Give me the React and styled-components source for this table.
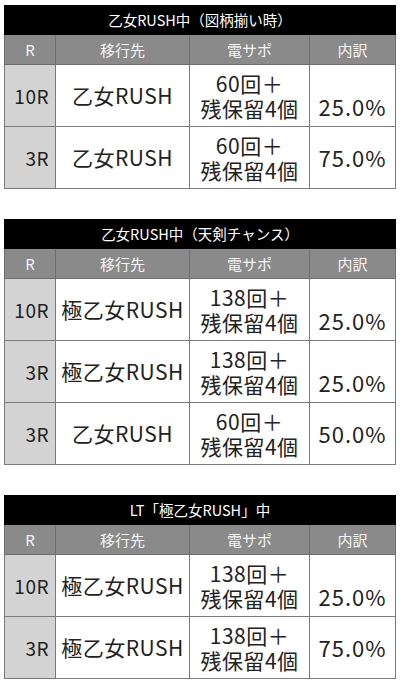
import React from "react";
import styled, { createGlobalStyle } from "styled-components";

const Global = createGlobalStyle`
  html, body { margin: 0; padding: 0; background: #fff; }
  body { font-family: "Noto Sans CJK JP", "Noto Sans", sans-serif; }
`;

const Page = styled.div`
  width: 400px;
  padding: 5px 5px 0 4px;
  box-sizing: border-box;
  display: flex;
  flex-direction: column;
  gap: 30px;
`;

const Table = styled.table`
  width: 391px;
  border-collapse: collapse;
  table-layout: fixed;
  border: 1px solid #7a7a7a;
`;

const Title = styled.th`
  background: #000;
  color: #fff;
  font-size: 14.5px;
  font-weight: normal;
  height: 28px;
  padding: 0;
  line-height: 20px;
  text-align: center;
  border: 1px solid #000;
`;

const Head = styled.th`
  background: #8a8a8a;
  color: #f4f4f4;
  font-size: 15px;
  font-weight: normal;
  height: 29px;
  padding: 0;
  line-height: 20px;
  text-align: center;
  border: 1px solid #6e6e6e;
`;

const Cell = styled.td`
  height: 62px;
  padding: 0;
  border: 1px solid #7a7a7a;
  background: #fff;
  color: #222;
  font-size: 21px;
  letter-spacing: 0.5px;
  line-height: 25px;
  text-align: center;
  vertical-align: middle;
  box-sizing: border-box;
  white-space: nowrap;
`;

const RCell = styled(Cell)`
  background: #d3d3d3;
  font-size: 19px;
  text-align: right;
  padding-right: 6px;
`;

const PctCell = styled(Cell)`
  font-size: 22px;
  letter-spacing: 1px;
  padding-top: ${(p) => (p.$low ? "22px" : "0")};
`;

const Line = styled.span`
  display: block;
  line-height: 25px;
`;

const widths = [51, 134, 120, 86];

const tables = [
  {
    title: "乙女RUSH中（図柄揃い時）",
    rows: [
      ["10R", "乙女RUSH", "60回＋", "25.0%", true],
      ["3R", "乙女RUSH", "60回＋", "75.0%", false],
    ],
  },
  {
    title: "乙女RUSH中（天剣チャンス）",
    rows: [
      ["10R", "極乙女RUSH", "138回＋", "25.0%", true],
      ["3R", "極乙女RUSH", "138回＋", "25.0%", true],
      ["3R", "乙女RUSH", "60回＋", "50.0%", false],
    ],
  },
  {
    title: "LT「極乙女RUSH」中",
    rows: [
      ["10R", "極乙女RUSH", "138回＋", "25.0%", true],
      ["3R", "極乙女RUSH", "138回＋", "75.0%", false],
    ],
  },
];

function ResultTable({ title, rows }) {
  return (
    <Table>
      <colgroup>
        {widths.map((w, i) => (
          <col key={i} style={{ width: w }} />
        ))}
      </colgroup>
      <thead>
        <tr>
          <Title colSpan={4}>{title}</Title>
        </tr>
        <tr>
          <Head>R</Head>
          <Head>移行先</Head>
          <Head>電サポ</Head>
          <Head>内訳</Head>
        </tr>
      </thead>
      <tbody>
        {rows.map((r, i) => (
          <tr key={i}>
            <RCell>{r[0]}</RCell>
            <Cell>{r[1]}</Cell>
            <Cell>
              <Line>{r[2]}</Line>
              <Line>残保留4個</Line>
            </Cell>
            <PctCell $low={r[4]}>{r[3]}</PctCell>
          </tr>
        ))}
      </tbody>
    </Table>
  );
}

export default function App() {
  return (
    <>
      <Global />
      <Page>
        {tables.map((t, i) => (
          <ResultTable key={i} {...t} />
        ))}
      </Page>
    </>
  );
}
